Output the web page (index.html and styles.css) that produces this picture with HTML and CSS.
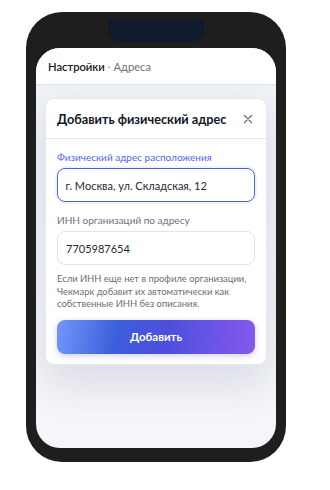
FILE: index.html
```html
<!DOCTYPE html>
<html lang="ru">
<head>
<meta charset="utf-8">
<link rel="stylesheet" href="styles.css">
</head>
<body>
<div class="phone">
  <div class="notch"></div>
  <div class="screen">
    <div class="topbar"><span class="crumb-main">Настройки</span><span class="crumb-sep"> · </span><span class="crumb-sub">Адреса</span></div>
    <div class="content">
      <div class="card">
        <div class="card-head">
          <span class="card-title">Добавить физический адрес</span>
          <svg class="close" width="10" height="10" viewBox="0 0 10 10"><path d="M1.5 1.5 L8.5 8.5 M8.5 1.5 L1.5 8.5" stroke="#64748b" stroke-width="1.4" stroke-linecap="round"/></svg>
        </div>
        <div class="card-body">
          <label class="label label-active">Физический адрес расположения</label>
          <div class="input input-active">г. Москва, ул. Складская, 12</div>
          <label class="label label-second">ИНН организаций по адресу</label>
          <div class="input">7705987654</div>
          <p class="hint">Если ИНН еще нет в профиле организации, Чекмарк добавит их автоматически как собственные ИНН без описания.</p>
          <button class="btn">Добавить</button>
        </div>
      </div>
    </div>
  </div>
</div>
</body>
</html>
```
FILE: styles.css
```css
* { box-sizing: border-box; }
html, body { margin: 0; padding: 0; background: #fff; }
body {
  font-family: Lato, "Noto Sans", sans-serif;
  padding: 12px 0 0 26px;
}
.phone {
  position: relative;
  width: 260px;
  height: 450px;
  background: #1e1e1e;
  border-radius: 36px;
  padding: 36px 10px 14px;
}
.notch {
  position: absolute;
  left: 82px;
  top: 8px;
  width: 96px;
  height: 22px;
  background: #111a2d;
  border-radius: 0 0 12px 12px;
}
.screen {
  height: 100%;
  border-radius: 24px;
  overflow: hidden;
  background: linear-gradient(#eef1f6, #f5f6fa);
  display: flex;
  flex-direction: column;
}
.topbar {
  height: 37px;
  background: #fff;
  border-bottom: 1px solid #dfe4ec;
  padding: 0 12px;
  display: flex;
  align-items: center;
  font-size: 11.2px;
}
.crumb-main { color: #111827; font-weight: 600; }
.crumb-sep { color: #9ca3af; white-space: pre; }
.crumb-sub { color: #6b7280; }
.content { padding: 13px 9px; }
.card {
  background: #fff;
  border: 1px solid #e3e7ee;
  border-radius: 9px;
  box-shadow: 0 18px 40px rgba(30, 41, 70, 0.12);
}
.card-head {
  height: 40px;
  border-bottom: 1px solid #e3e7ee;
  display: flex;
  align-items: center;
  justify-content: space-between;
  padding: 0 13px 0 11px;
}
.card-title { font-size: 12.7px; font-weight: 700; color: #111827; }
.close { display: block; margin-top: 1px; }
.card-body { padding: 11px 11px 10px; display: flex; flex-direction: column; }
.label { font-size: 10px; line-height: 14px; }
.label-active { color: #5466e6; }
.label-second { color: #6b7280; margin-top: 11px; }
.input {
  margin-top: 4px;
  height: 34px;
  border: 1px solid #dfe4ee;
  border-radius: 8px;
  display: flex;
  align-items: center;
  padding: 0 8px;
  font-size: 11px;
  color: #1f2937;
}
.input-active {
  border: 1.5px solid #4a62e6;
  box-shadow: 0 0 0 2px rgba(74, 98, 230, 0.08);
  padding-left: 7.5px;
}
.hint {
  margin: 8px 0 0;
  font-size: 9.4px;
  line-height: 12.5px;
  color: #6b6e76;
}
.btn {
  margin-top: 9px;
  height: 34px;
  border: none;
  border-radius: 8px;
  background: linear-gradient(100deg, #7397fa 0%, #3c5fdc 30%, #4c4fdc 55%, #8759ef 100%);
  color: #fff;
  font-family: inherit;
  font-size: 11.5px;
  font-weight: 700;
  box-shadow: 0 2px 6px rgba(70, 80, 220, 0.25);
}
```
